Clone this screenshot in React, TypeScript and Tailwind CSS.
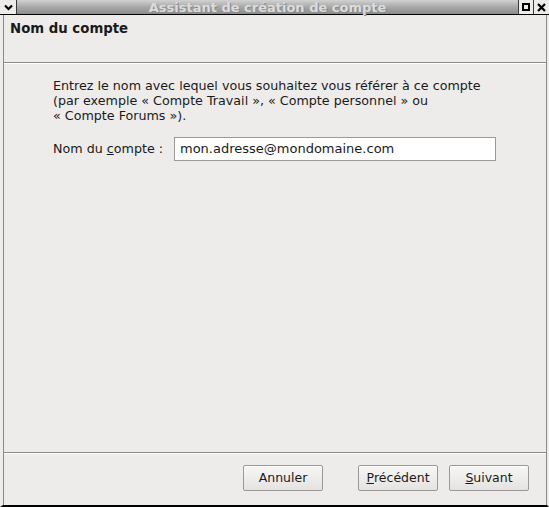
import React from "react";

const font = { fontFamily: '"DejaVu Sans", Verdana, sans-serif' };

function Btn({ children }: { children: React.ReactNode }) {
  return (
    <div className="w-[80px] h-[26px] flex items-center justify-center rounded-[2px] border border-[#9a9996] bg-gradient-to-b from-[#f7f7f6] to-[#e4e3e1] text-[12.5px] text-[#1a1a1a] shadow-[inset_0_1px_0_#ffffff]">
      {children}
    </div>
  );
}

export default function App() {
  return (
    <div style={font} className="w-[549px] h-[507px] bg-[#edeceb] flex flex-col overflow-hidden">
      {/* Title bar */}
      <div className="h-[15px] flex border-b border-black bg-[#edeceb]">
        <div className="w-[17px] h-[14px] flex items-center justify-center border-r border-[#3a3a3a] bg-[#edeceb]">
          <svg width="9" height="7" viewBox="0 0 9 7">
            <path d="M1 1.5 L4.5 5 L8 1.5" stroke="#000" strokeWidth="2.2" fill="none" />
          </svg>
        </div>
        <div className="flex-1 h-[14px] flex items-center justify-center bg-gradient-to-b from-[#d2d2d2] via-[#a8a8a8] to-[#8c8c8c] border-r border-[#3a3a3a]">
          <span className="text-[13px] font-bold leading-none text-[#dcdcdc] [text-shadow:1px_1px_0_#8a8a8a]">
            Assistant de création de compte
          </span>
        </div>
        <div className="w-[15px] h-[14px] flex items-center justify-center border-r border-[#3a3a3a] bg-[#edeceb]">
          <div className="w-[8px] h-[8px] border-[2.5px] border-black" />
        </div>
        <div className="w-[15px] h-[14px] flex items-center justify-center bg-[#edeceb]">
          <svg width="9" height="9" viewBox="0 0 9 9">
            <path d="M1 1 L8 8 M8 1 L1 8" stroke="#000" strokeWidth="2.2" />
          </svg>
        </div>
      </div>

      {/* Body */}
      <div className="flex-1 flex flex-col border-l-[3px] border-l-[#edeceb] border-r-[2px] border-r-[#edeceb] border-b-[2px] border-b-black">
        <div className="flex-1 flex flex-col border-l border-l-[#8a8a8a] border-r border-r-[#8a8a8a]">
          {/* Header */}
          <div className="h-[47px] pl-[6px] pt-[6px]">
            <div className="text-[13.3px] font-bold text-[#1a1a1a] leading-[16px]">Nom du compte</div>
          </div>
          <div className="h-[2px] border-t border-[#8a8a8a] bg-white" />

          {/* Content */}
          <div className="flex-1 pl-[49px] pt-[14px]">
            <div className="text-[12.7px] leading-[15px] text-[#1a1a1a] whitespace-nowrap">
              <div>Entrez le nom avec lequel vous souhaitez vous référer à ce compte</div>
              <div>(par exemple « Compte Travail », « Compte personnel » ou</div>
              <div>« Compte Forums »).</div>
            </div>
            <div className="mt-[14px] flex items-center">
              <span className="text-[12.7px] text-[#1a1a1a] w-[121px]">
                Nom du <span className="underline">c</span>ompte :
              </span>
              <div className="w-[322px] h-[24px] bg-white border border-[#9a9996] flex items-center pl-[5px] text-[13px] text-[#1a1a1a]">
                mon.adresse@mondomaine.com
              </div>
            </div>
          </div>

          {/* Bottom separator */}
          <div className="h-[2px] border-t border-[#8a8a8a] bg-white" />
          <div className="h-[51px] flex items-start pt-[11px] pl-[239px]">
            <Btn>Annuler</Btn>
            <div className="w-[35px]" />
            <Btn>
              <span className="underline">P</span>récédent
            </Btn>
            <div className="w-[11px]" />
            <Btn>
              <span className="underline">S</span>uivant
            </Btn>
          </div>
        </div>
      </div>
    </div>
  );
}
